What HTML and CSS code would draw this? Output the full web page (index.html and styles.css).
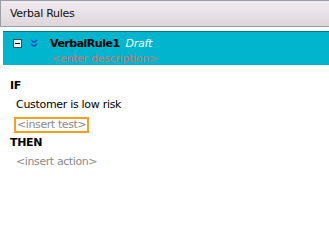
FILE: index.html
```html
<!DOCTYPE html>
<html>
<head>
<meta charset="utf-8">
<link rel="stylesheet" href="styles.css">
</head>
<body>
<div class="app">
  <div class="title-bar">Verbal Rules</div>
  <div class="rule-head">
    <div class="rule-row">
      <span class="collapse"><span class="minus"></span></span>
      <svg class="chev" width="8" height="9" viewBox="0 0 8 9"><path d="M1 1 L4 3.5 L7 1 M1 5 L4 7.5 L7 5" fill="none" stroke="#2040c0" stroke-width="1.3"/></svg>
      <span class="rule-name">VerbalRule1</span>
      <span class="status">Draft</span>
    </div>
    <div class="desc">&lt;enter description&gt;</div>
  </div>
  <div class="body">
    <div class="kw">IF</div>
    <div class="line">Customer is low risk</div>
    <div class="line"><span class="slot focused">&lt;insert test&gt;</span></div>
    <div class="kw">THEN</div>
    <div class="line"><span class="slot">&lt;insert action&gt;</span></div>
  </div>
</div>
</body>
</html>
```
FILE: styles.css
```css
html, body {
  margin: 0;
  padding: 0;
  background: #ffffff;
}
body {
  font-family: "DejaVu Sans", sans-serif;
  font-size: 11px;
  letter-spacing: -0.3px;
  color: #000;
}
.app {
  width: 329px;
  height: 242px;
  overflow: hidden;
}
.title-bar {
  height: 27px;
  box-sizing: border-box;
  border: 1px solid #9c9ca6;
  border-right: none;
  background: linear-gradient(#f1eaf0, #ddd7db);
  padding: 6px 0 0 9px;
  color: #111;
}
.rule-head {
  margin: 4px 0 0 3px;
  background: #00b5cd;
  border-top: 1px solid #00768a;
  height: 34px;
  box-sizing: border-box;
  padding: 5px 0 0 10px;
  overflow: hidden;
}
.rule-row {
  display: flex;
  align-items: center;
  height: 13px;
}
.collapse {
  width: 9px;
  height: 9px;
  box-sizing: border-box;
  border: 1px solid #4a4a4a;
  background: #f4f4f4;
  display: flex;
  align-items: center;
  justify-content: center;
}
.minus {
  width: 5px;
  height: 1px;
  background: #000;
}
.chev {
  margin-left: 8px;
}
.rule-name {
  margin-left: 12px;
  font-weight: bold;
  letter-spacing: -0.5px;
  color: #000;
}
.status {
  margin-left: 6px;
  font-style: italic;
  color: #ffffff;
}
.desc {
  margin: 2px 0 0 38px;
  color: #c67a72;
}
.body {
  padding: 14px 0 0 10px;
}
.kw {
  font-weight: bold;
  height: 19px;
}
.line {
  padding-left: 6px;
  height: 19px;
}
.slot {
  color: #8a8a8a;
  letter-spacing: -0.4px;
}
.focused {
  display: inline-block;
  vertical-align: top;
  margin-left: -2px;
  margin-top: 0;
  padding: 0 1px;
  border: 2px solid #f5a11b;
  line-height: 12px;
}
```
